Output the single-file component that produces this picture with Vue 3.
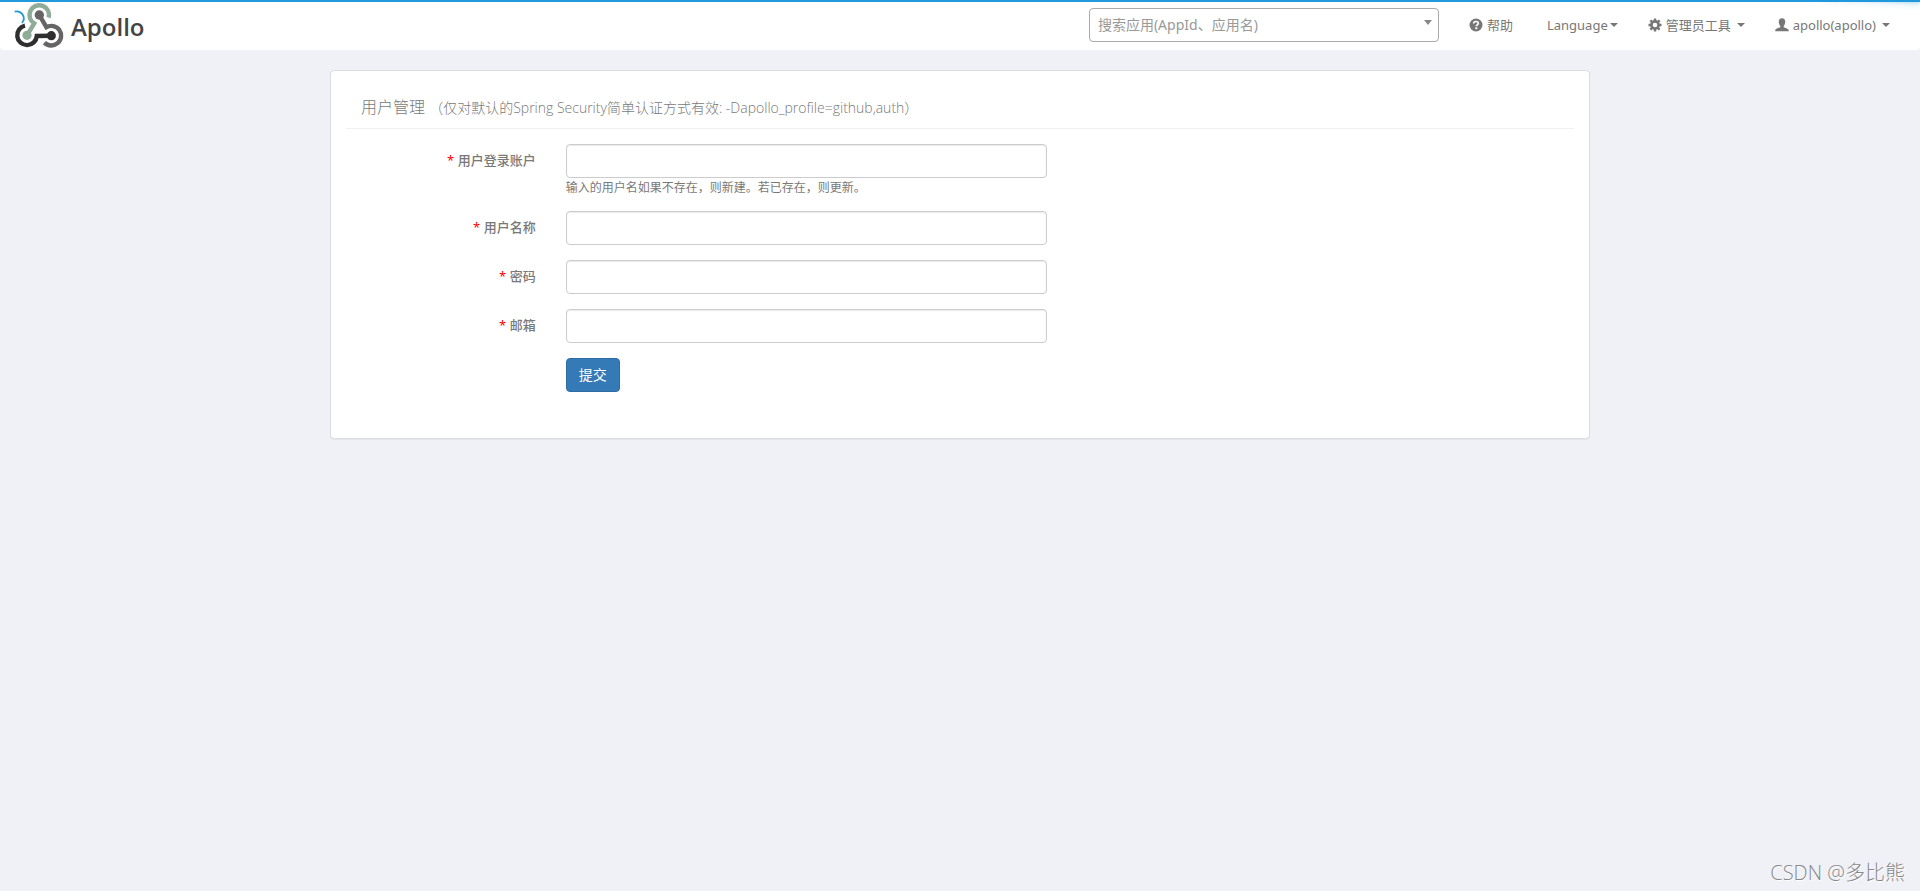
<script setup>
import { ref } from 'vue'

const app = ref('')
const fields = ref([
  { id: 'username', label: '用户登录账户', type: 'text', value: '', help: '输入的用户名如果不存在，则新建。若已存在，则更新。' },
  { id: 'displayName', label: '用户名称', type: 'text', value: '' },
  { id: 'password', label: '密码', type: 'password', value: '' },
  { id: 'email', label: '邮箱', type: 'email', value: '' }
])
</script>

<template>
  <div class="page">
    <header class="navbar">
      <div class="progress"><span class="peg"></span></div>
      <a class="brand" href="#" aria-label="Apollo">
        <svg class="mark" viewBox="0 0 52 48" width="52" height="48" fill="none">
          <path d="M2.700 10.700A7 7 0 0 1 10 22" stroke="#2299dd" stroke-width="1.800" />
          <path d="M15 34.300L22.200 22.400A9.800 9.800 0 1 1 36.700 16.700" stroke="#8fac98" stroke-width="4.400" />
          <circle cx="15" cy="34.300" r="4.600" fill="#8fac98" />
          <path d="M13 24.700A9.800 9.800 0 1 0 24.800 35L39.300 34.700" stroke="#2f2f2f" stroke-width="4.400" />
          <circle cx="39.300" cy="34.700" r="4.600" fill="#2f2f2f" />
          <path d="M27.300 14L34.400 26.200A9.800 9.800 0 1 1 32.400 41.600" stroke="#666464" stroke-width="4.400" />
          <circle cx="27.300" cy="14" r="4.700" fill="#666464" />
        </svg>
        <span class="brand-name">Apollo</span>
      </a>
      <nav class="menu">
        <div class="search">
          <select v-model="app" aria-label="搜索应用">
            <option value="">搜索应用(AppId、应用名)</option>
          </select>
          <svg class="arrow" viewBox="0 0 8 5" width="8" height="5"><path d="M0 0H8L4 5Z" fill="#888" /></svg>
        </div>
        <a class="item help-link" href="#">
          <svg viewBox="0 0 14 14" width="14" height="14">
            <circle cx="7" cy="7" r="6.500" fill="#777" />
            <path d="M4.700 5.600Q4.700 3.500 7 3.500T9.300 5.300Q9.300 6.300 8.200 6.900Q7.300 7.400 7.300 8.300" fill="none" stroke="#fff" stroke-width="1.700" />
            <path d="M6.300 9.300H8.300V11.200H6.300Z" fill="#fff" />
          </svg>
          <span>帮助</span>
        </a>
        <a class="item tight" href="#"><span>Language</span><i class="caret"></i></a>
        <a class="item" href="#">
          <svg viewBox="0 0 14 14" width="14" height="14">
            <circle cx="7" cy="7" r="3.600" fill="none" stroke="#777" stroke-width="2.600" />
            <path d="M7 .5V3M7 11V13.500M.5 7H3M11 7H13.500M2.400 2.400L4.200 4.200M9.800 9.800L11.600 11.600M11.600 2.400L9.800 4.200M4.200 9.800L2.400 11.600" stroke="#777" stroke-width="2.400" />
          </svg>
          <span>管理员工具</span><i class="caret spaced"></i>
        </a>
        <a class="item" href="#">
          <svg viewBox="0 0 14 14" width="14" height="14">
            <path d="M7 .3C9.300 .3 10.400 1.900 10.200 4.200C10.100 6 9.300 7.300 8.700 8V9.200C10.500 10 13.500 10.700 13.700 12V13.300H.3V12C.5 10.700 3.500 10 5.300 9.200V8C4.700 7.300 3.900 6 3.800 4.200C3.600 1.900 4.700 .3 7 .3Z" fill="#777" />
          </svg>
          <span>apollo(apollo)</span><i class="caret spaced"></i>
        </a>
      </nav>
    </header>

    <main class="content">
      <section class="panel">
        <h1 class="title">用户管理 <small>（仅对默认的Spring Security简单认证方式有效: -Dapollo_profile=github,auth）</small></h1>
        <form class="form" @submit.prevent>
          <div v-for="field in fields" :key="field.id" class="row">
            <label :for="field.id"><span class="required">*</span> {{ field.label }}</label>
            <div class="control">
              <input :id="field.id" v-model="field.value" :type="field.type">
              <small v-if="field.help" class="hint">{{ field.help }}</small>
            </div>
          </div>
          <div class="row">
            <div class="control submit"><button type="submit">提交</button></div>
          </div>
        </form>
      </section>
    </main>

    <div class="watermark">CSDN @多比熊</div>
  </div>
</template>

<style>
body {
  background: #f0f1f7;
}
</style>

<style scoped>
.page {
  position: relative;
  min-height: 100vh;
  color: #797979;
  font: 13px/20px "Noto Sans", "Noto Sans CJK SC", sans-serif;
}
.page *,
.page {
  box-sizing: border-box;
}
.navbar {
  position: relative;
  display: flex;
  justify-content: space-between;
  height: 50px;
  padding: 0 15px 0 12px;
  background: #fff;
  border-radius: 0 0 4px 4px;
}
.progress {
  position: absolute;
  top: 0;
  left: 0;
  width: 100%;
  height: 2px;
  background: #29d;
}
.peg {
  position: absolute;
  top: 0;
  right: 0;
  width: 100px;
  height: 100%;
  box-shadow: 0 0 10px #29d, 0 0 5px #29d;
  transform: rotate(3deg) translate(0, -4px);
}
.brand {
  display: flex;
  align-items: center;
  gap: 7px;
  color: #444;
  text-decoration: none;
}
.brand-name {
  padding-top: 4px;
  font: 600 24px/28px "Open Sans", sans-serif;
}
.menu {
  display: flex;
  align-items: center;
}
.search {
  position: relative;
  width: 350px;
  margin-right: 15px;
}
.search select {
  display: block;
  width: 100%;
  height: 34px;
  padding: 0 8px;
  appearance: none;
  border: 1px solid #aaa;
  border-radius: 4px;
  background: #fff;
  color: #999;
  font: 14px/20px "Noto Sans", "Noto Sans CJK SC", sans-serif;
}
.arrow {
  position: absolute;
  top: 12px;
  right: 7px;
}
.item {
  display: flex;
  align-items: center;
  gap: 4px;
  padding: 0 15px;
  color: #777;
  text-decoration: none;
}
.help-link {
  margin-right: 4px;
}
.tight {
  gap: 2px;
}
.caret {
  border-top: 4px solid #777;
  border-left: 4px solid transparent;
  border-right: 4px solid transparent;
}
.spaced {
  margin-left: 2px;
}
.content {
  display: flex;
  justify-content: center;
  padding: 20px 15px;
}
.panel {
  width: 67%;
  max-width: 1260px;
  padding: 15px 15px 46px;
  border: 1px solid #dcdde2;
  border-radius: 4px;
  background: #fff;
  box-shadow: 0 1px 1px rgba(0, 0, 0, 0.05);
}
.title {
  margin: 0;
  padding: 9px 15px 8px;
  border-bottom: 1px solid #eff0f6;
  font-family: "Open Sans", "Noto Sans CJK SC", sans-serif;
  font-size: 16px;
  font-weight: 300;
  line-height: 24px;
}
.title small {
  font-size: 14px;
}
.form {
  display: grid;
  gap: 15px;
  padding-top: 15px;
}
.row {
  display: grid;
  grid-template-columns: 2fr 5fr 5fr;
}
.row label {
  padding: 6px 15px 0;
  text-align: right;
  font-weight: 500;
}
.required {
  color: red;
  font-weight: 400;
}
.control {
  grid-column: 2;
  padding: 0 15px;
}
.control input {
  display: block;
  width: 100%;
  height: 34px;
  padding: 6px 12px;
  border: 1px solid #ccc;
  border-radius: 4px;
  background: #fff;
  box-shadow: inset 0 1px 1px rgba(0, 0, 0, 0.08);
  color: #555;
  font: 14px/20px "Noto Sans", "Noto Sans CJK SC", sans-serif;
}
.hint {
  display: block;
  margin-top: 2px;
  font-size: 12px;
  line-height: 16px;
}
.submit button {
  display: block;
  height: 34px;
  padding: 0 12px;
  border: 1px solid #2e6da4;
  border-radius: 4px;
  background: #337ab7;
  color: #fff;
  font: 14px/20px "Noto Sans", "Noto Sans CJK SC", sans-serif;
}
.watermark {
  position: absolute;
  right: 15px;
  bottom: 4px;
  color: #888;
  font: 300 20px/28px "Open Sans", "Noto Sans CJK SC", sans-serif;
  text-shadow: 1px 1px 1px #fff;
}
</style>
